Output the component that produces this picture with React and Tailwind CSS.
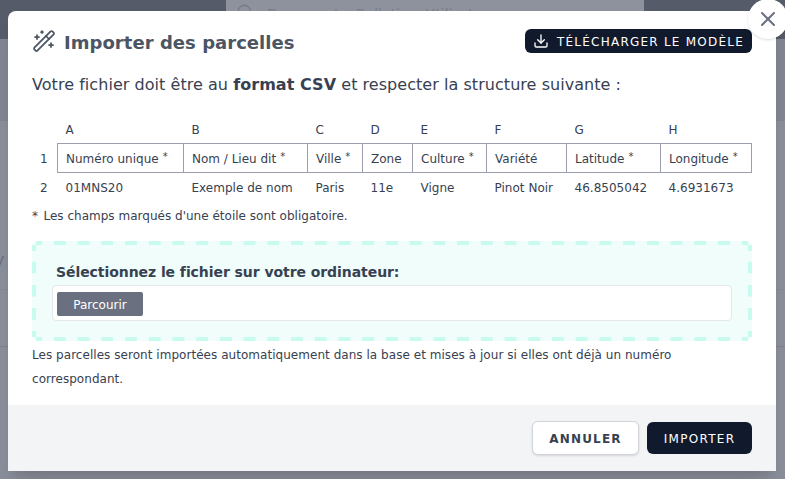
import { WandSparkles, Download, Search, X } from "lucide-react";

const columns = [
  { letter: "A", label: "Numéro unique", required: true, sample: "01MNS20" },
  { letter: "B", label: "Nom / Lieu dit", required: true, sample: "Exemple de nom" },
  { letter: "C", label: "Ville", required: true, sample: "Paris" },
  { letter: "D", label: "Zone", required: false, sample: "11e" },
  { letter: "E", label: "Culture", required: true, sample: "Vigne" },
  { letter: "F", label: "Variété", required: false, sample: "Pinot Noir" },
  { letter: "G", label: "Latitude", required: true, sample: "46.8505042" },
  { letter: "H", label: "Longitude", required: true, sample: "4.6931673" },
];

const rowGrid = "grid grid-cols-[25px_126px_124px_55px_50px_74px_80px_94px_92px]";

function Backdrop() {
  return (
    <div className="absolute inset-0 flex flex-col overflow-hidden bg-[#8b8f9b]">
      <div className="flex h-[39px] shrink-0 bg-[#555b69] pl-[226px]">
        <div className="flex h-[39px] w-[418px] items-start bg-[#8d929d] pl-[10px] pt-[3px] text-[#777c89]">
          <Search size={18} strokeWidth={1.75} />
          <span className="ml-[13px] mt-px text-sm leading-5">Documents, Bulletins, Utilisateurs...</span>
        </div>
      </div>
      <div className="h-[82px] shrink-0 bg-[#828693]" />
      <div className="h-[169px] shrink-0 border-b border-[#868a97]" />
      <div className="h-[57px] shrink-0 border-b border-[#7f8390]" />
      <div className="absolute -left-[5px] top-[250px] text-base leading-5 text-[#6b7080]">y</div>
    </div>
  );
}

function DashedFrame() {
  return (
    <svg className="absolute inset-0" width="720" height="100" fill="none" stroke="#c8faf0" strokeWidth="4">
      <path d="M21.9 2H700" strokeDasharray="11.86" />
      <path d="M21.9 98H700" strokeDasharray="11.86" />
      <path d="M2 20.7V80" strokeDasharray="11.6" />
      <path d="M718 20.7V80" strokeDasharray="11.6" />
      <path d="M4 2H10M710 2H716M4 98H10M710 98H716M2 4V10M718 4V10M2 90V96M718 90V96" />
    </svg>
  );
}

export default function App() {
  return (
    <div className="relative h-[479px] w-[785px] overflow-hidden font-['DejaVu_Sans','Noto_Sans',sans-serif] text-[#374151]">
      <Backdrop />
      <div className="absolute left-2 top-[11px] flex h-[460px] w-[768px] flex-col rounded-t-lg bg-white shadow-xl">
        <div className="flex flex-1 flex-col px-6 pt-[18px]">
          <header className="flex h-6 items-center justify-between">
            <h1 className="flex items-center gap-2 text-lg font-bold leading-6 text-[#4b5563]">
              <WandSparkles size={24} strokeWidth={1.75} />
              <span className="pt-[3px] tracking-[0.04px]">Importer des parcelles</span>
            </h1>
            <button className="flex h-6 w-[227px] items-center gap-2 rounded-md bg-[#111a2d] pl-2 text-xs text-white">
              <Download size={16} strokeWidth={2} className="shrink-0" />
              <span className="whitespace-nowrap pt-px tracking-[1.23px]">TÉLÉCHARGER LE MODÈLE</span>
            </button>
          </header>

          <p className="mt-5 whitespace-nowrap text-base leading-6 tracking-[0.045px]">
            Votre fichier doit être au <b>format CSV</b> et respecter la structure suivante :
          </p>

          <div className="mt-[18px] text-xs">
            <div className={`${rowGrid} h-7 items-center pt-0.5`}>
              <span />
              {columns.map((c) => (
                <span key={c.letter} className="pl-[8.5px]">{c.letter}</span>
              ))}
            </div>
            <div className={`${rowGrid} h-[30px]`}>
              <span className="self-center pl-2 pt-0.5">1</span>
              {columns.map((c) => (
                <span key={c.letter} className="flex items-center whitespace-nowrap border-y border-l border-[#9a9eae] pl-2 pt-0.5 last:border-r">
                  {c.label}
                  {c.required && <span className="relative -top-0.5 ml-1 text-[10px]">*</span>}
                </span>
              ))}
            </div>
            <div className={`${rowGrid} h-[30px] items-center`}>
              <span className="pl-2">2</span>
              {columns.map((c) => (
                <span key={c.letter} className="whitespace-nowrap pl-[8.5px] tracking-[0.02px]">{c.sample}</span>
              ))}
            </div>
          </div>
          <p className="mt-px text-xs leading-6 tracking-[0.015px]">
            <span className="mr-[1.6px]">*</span> Les champs marqués d'une étoile sont obligatoire.
          </p>

          <div className="relative mt-[13px] h-[100px] shrink-0 rounded-md bg-[#f0fdfa] px-5 pt-[19px]">
            <DashedFrame />
            <label className="block pb-px pl-1 text-sm font-bold leading-6 tracking-[-0.065px]">Sélectionnez le fichier sur votre ordinateur:</label>
            <div className="flex h-9 items-center rounded border border-[#e5e7eb] bg-white pl-1 pt-0.5">
              <button className="h-6 w-[86px] rounded-[2px] bg-[#6b7080] pt-px text-xs text-white">Parcourir</button>
            </div>
          </div>
          <p className="mt-0.5 text-xs leading-6 tracking-[0.04px]">
            Les parcelles seront importées automatiquement dans la base et mises à jour si elles ont déjà un numéro correspondant.
          </p>
        </div>
        <footer className="flex h-[66px] shrink-0 items-center justify-end gap-2 bg-[#f3f4f6] px-6 text-xs tracking-[1.2px]">
          <button className="h-[34px] w-[107px] rounded-md border border-[#d1d5db] bg-white pt-0.5 font-bold shadow-sm">ANNULER</button>
          <button className="h-8 w-[105px] rounded-md bg-[#111a2d] pt-0.5 tracking-[1.3px] text-white">IMPORTER</button>
        </footer>
      </div>
      <button className="absolute left-[748px] top-[-1px] flex size-10 items-center justify-center rounded-full bg-white text-[#6b7080] shadow">
        <X size={24} strokeWidth={2} />
      </button>
    </div>
  );
}
